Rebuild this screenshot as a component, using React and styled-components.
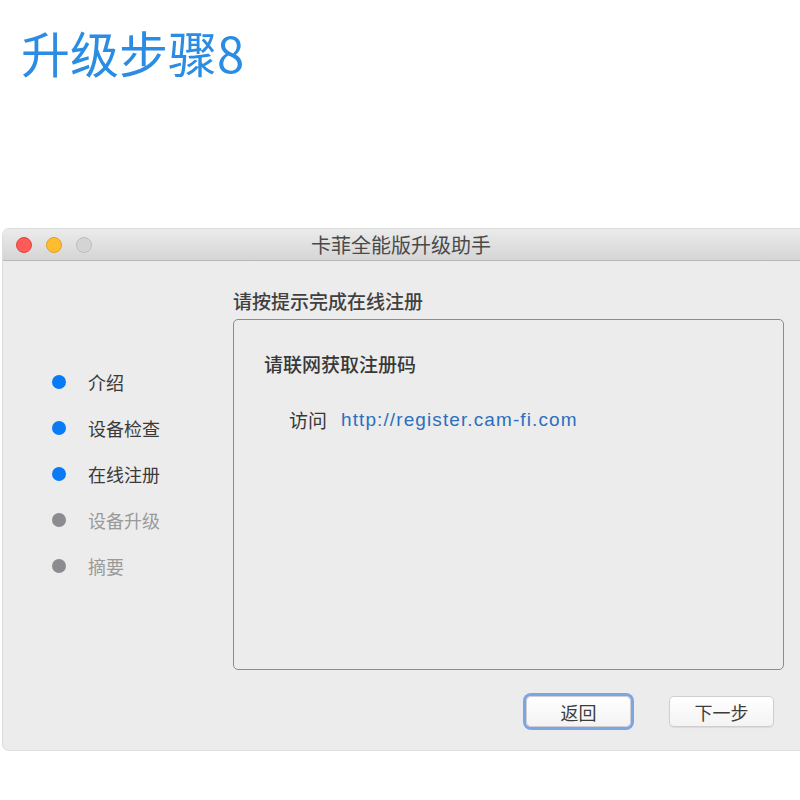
import styled, { createGlobalStyle } from "styled-components";

const GlobalStyle = createGlobalStyle`
  html, body {
    margin: 0;
    padding: 0;
    background: #ffffff;
  }
  body {
    font-family: "Liberation Sans", "Noto Sans CJK SC", sans-serif;
  }
`;

const Page = styled.div`
  width: 800px;
  height: 800px;
  overflow: hidden;
  display: flex;
  flex-direction: column;
`;

const PageTitle = styled.h1`
  margin: 25px 0 0 21px;
  height: 53px;
  font-family: "Noto Sans CJK SC", sans-serif;
  font-size: 49px;
  line-height: 53px;
  font-weight: 400;
  color: #2a8ce2;
`;

const Window = styled.div`
  margin: 151px 0 0 3px;
  width: 810px;
  height: 521px;
  background: #ececec;
  border-radius: 6px 6px 0 6px;
  box-shadow: 0 0 0 1px #dcdcdc;
  display: flex;
  flex-direction: column;
  overflow: hidden;
`;

const TitleBar = styled.div`
  height: 32px;
  flex: none;
  box-sizing: border-box;
  border-bottom: 1px solid #b9b9b9;
  background: linear-gradient(#ebebeb, #d5d5d5);
  display: grid;
  grid-template-columns: 1fr auto 1fr;
  align-items: center;
`;

const Lights = styled.div`
  display: flex;
  gap: 14px;
  padding-left: 13px;
`;

const Light = styled.span`
  width: 16px;
  height: 16px;
  border-radius: 50%;
  box-sizing: border-box;
  background: ${(p) => p.$color};
  border: 1px solid ${(p) => p.$edge};
`;

const WindowTitle = styled.div`
  font-family: "Noto Sans CJK SC", sans-serif;
  font-size: 20px;
  color: #4a4a4a;
  padding-right: 14px;
`;

const Body = styled.div`
  flex: 1;
  display: grid;
  grid-template-columns: 230px 1fr;
`;

const Steps = styled.ul`
  list-style: none;
  margin: 0;
  padding: 98px 0 0 49px;
`;

const Step = styled.li`
  height: 46px;
  display: flex;
  align-items: center;
  gap: 22px;
  font-family: "Noto Sans CJK SC", sans-serif;
  font-size: 18px;
  color: ${(p) => (p.$done ? "#3a3a3a" : "#9a9a9a")};
`;

const Dot = styled.span`
  width: 14px;
  height: 14px;
  border-radius: 50%;
  background: ${(p) => (p.$done ? "#0a7bf4" : "#8c8c90")};
`;

const Main = styled.div`
  padding: 28px 29px 0 0;
  display: flex;
  flex-direction: column;
`;

const Heading = styled.div`
  font-family: "Noto Sans CJK SC", sans-serif;
  font-size: 19px;
  line-height: 24px;
  font-weight: 500;
  color: #404040;
  margin-bottom: 6px;
`;

const Panel = styled.div`
  height: 351px;
  box-sizing: border-box;
  border: 1.5px solid #8c8c8c;
  border-radius: 5px;
  padding: 32px 0 0 30px;
`;

const PanelText = styled.div`
  font-family: "Noto Sans CJK SC", sans-serif;
  font-size: 19px;
  line-height: 24px;
  font-weight: 500;
  color: #383838;
`;

const VisitRow = styled.div`
  margin: 32px 0 0 25px;
  display: flex;
  align-items: center;
  gap: 14px;
  font-size: 19px;
  line-height: 24px;
`;

const VisitLabel = styled.span`
  font-family: "Noto Sans CJK SC", sans-serif;
  color: #383838;
`;

const Link = styled.a`
  font-family: "Liberation Sans", sans-serif;
  color: #2b6fbe;
  letter-spacing: 1.1px;
  text-decoration: none;
`;

const Buttons = styled.div`
  display: flex;
  justify-content: flex-end;
  gap: 38px;
  margin-top: 26px;
  padding-right: 10px;
`;

const Button = styled.button`
  width: 105px;
  height: 31px;
  border-radius: 5px;
  border: 1px solid #cfcfcf;
  background: linear-gradient(#ffffff, #f3f3f3);
  font-family: "Noto Sans CJK SC", sans-serif;
  font-size: 18px;
  color: #3c3c3c;
  padding: 0;
  box-shadow: ${(p) =>
    p.$focused ? "0 0 0 3px #7da4e6" : "0 1px 1px rgba(0, 0, 0, 0.08)"};
`;

const steps = [
  { label: "介绍", done: true },
  { label: "设备检查", done: true },
  { label: "在线注册", done: true },
  { label: "设备升级", done: false },
  { label: "摘要", done: false },
];

export default function App() {
  return (
    <Page>
      <GlobalStyle />
      <PageTitle>升级步骤8</PageTitle>
      <Window>
        <TitleBar>
          <Lights>
            <Light $color="#fc5b57" $edge="#e2443f" />
            <Light $color="#fdbd2f" $edge="#e0a125" />
            <Light $color="#d4d4d4" $edge="#bdbdbd" />
          </Lights>
          <WindowTitle>卡菲全能版升级助手</WindowTitle>
          <span />
        </TitleBar>
        <Body>
          <Steps>
            {steps.map((s) => (
              <Step key={s.label} $done={s.done}>
                <Dot $done={s.done} />
                {s.label}
              </Step>
            ))}
          </Steps>
          <Main>
            <Heading>请按提示完成在线注册</Heading>
            <Panel>
              <PanelText>请联网获取注册码</PanelText>
              <VisitRow>
                <VisitLabel>访问</VisitLabel>
                <Link href="#">http://register.cam-fi.com</Link>
              </VisitRow>
            </Panel>
            <Buttons>
              <Button $focused>返回</Button>
              <Button>下一步</Button>
            </Buttons>
          </Main>
        </Body>
      </Window>
    </Page>
  );
}
